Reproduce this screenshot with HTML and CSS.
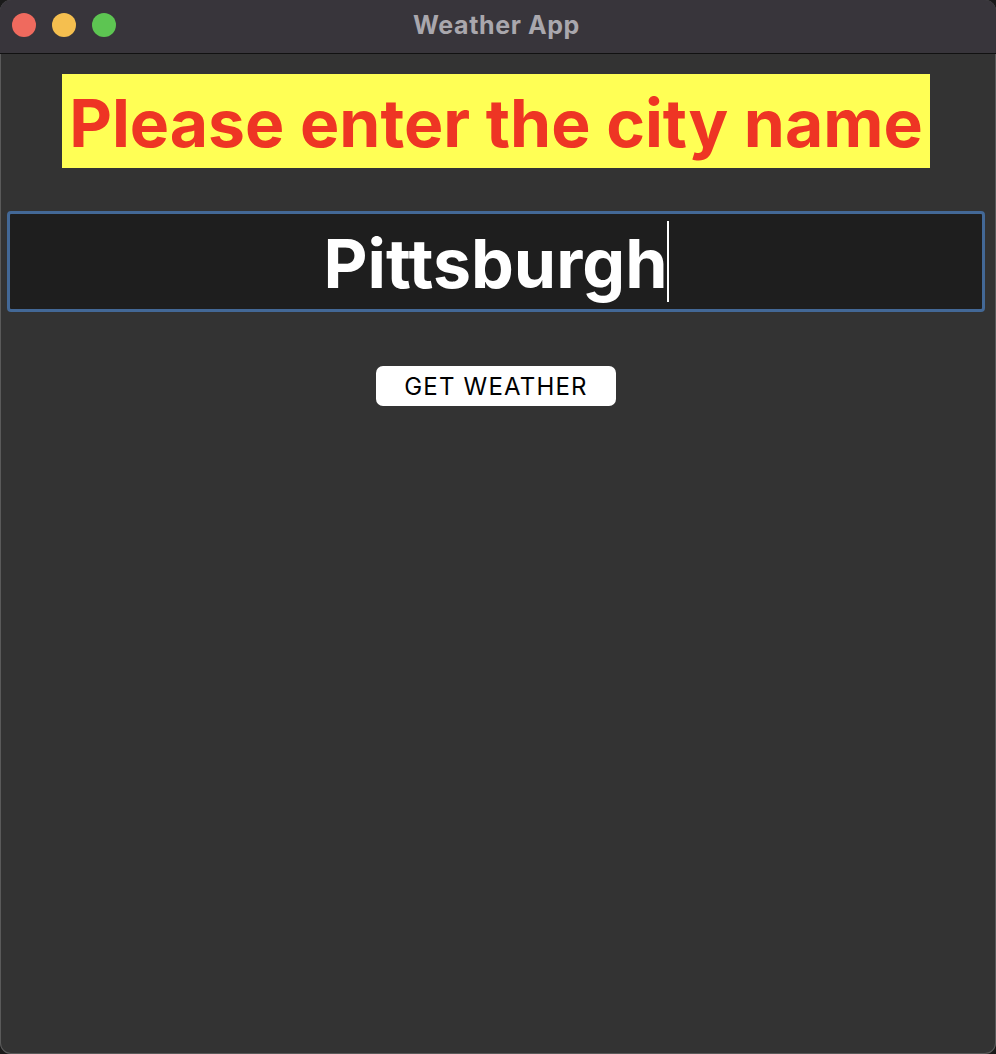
FILE: index.html
```html
<!DOCTYPE html>
<html>
<head>
<meta charset="utf-8">
<link rel="stylesheet" href="styles.css">
</head>
<body>
<div class="window">
  <div class="titlebar">
    <div class="lights">
      <span class="light red"></span>
      <span class="light yellow"></span>
      <span class="light green"></span>
    </div>
    <div class="title">Weather App</div>
  </div>
  <div class="content">
    <div class="banner">Please enter the city name</div>
    <div class="field"><span class="value">Pittsburgh</span><span class="caret"></span></div>
    <button class="btn">GET WEATHER</button>
  </div>
</div>
</body>
</html>
```
FILE: styles.css
```css
* { box-sizing: border-box; }
html, body {
  margin: 0;
  padding: 0;
  background: #1a1a1a;
  width: 996px;
  height: 1054px;
  overflow: hidden;
}
.window {
  width: 996px;
  height: 1054px;
  border-radius: 11px;
  overflow: hidden;
  background: #333333;
  display: flex;
  flex-direction: column;
  box-shadow: inset 0 0 0 1px #5a5a5a;
}
.titlebar {
  height: 54px;
  background: #38353b;
  border-bottom: 1px solid #111;
  position: relative;
  display: flex;
  align-items: center;
  justify-content: center;
  flex-shrink: 0;
}
.lights {
  position: absolute;
  left: 12px;
  top: 13px;
  display: flex;
  gap: 16px;
}
.light {
  width: 24px;
  height: 24px;
  border-radius: 50%;
  display: block;
}
.red { background: #ef6a5e; }
.yellow { background: #f5bf4f; }
.green { background: #5dc552; }
.title {
  font-family: Inter, "Liberation Sans", sans-serif;
  font-weight: 700;
  font-size: 25px;
  letter-spacing: 0.6px;
  color: #a9a7ad;
  margin-top: -4px;
  margin-right: 3px;
}
.content {
  flex: 1;
  display: flex;
  flex-direction: column;
  align-items: center;
  padding: 20px 11px 0 7px;
}
.banner {
  width: 868px;
  height: 94px;
  background: #ffff55;
  color: #ee3524;
  font-family: Inter, "Liberation Sans", sans-serif;
  font-weight: 700;
  font-size: 66px;
  display: flex;
  align-items: center;
  justify-content: center;
  white-space: nowrap;
  padding-top: 4px;
}
.field {
  margin-top: 43px;
  width: 978px;
  height: 101px;
  background: #1e1e1e;
  border: 3px solid #436896;
  border-radius: 4px;
  display: flex;
  align-items: center;
  justify-content: center;
  font-family: Inter, "Liberation Sans", sans-serif;
  font-weight: 700;
  font-size: 68px;
  color: #ffffff;
}
.value { line-height: 1; padding-top: 2px; }
.caret {
  width: 2px;
  height: 81px;
  background: #ffffff;
  margin-left: -1px;
}
.btn {
  margin-top: 54px;
  width: 240px;
  height: 40px;
  background: #ffffff;
  border: none;
  border-radius: 7px;
  font-family: Inter, "Liberation Sans", sans-serif;
  font-size: 24px;
  letter-spacing: 1.2px;
  font-weight: 400;
  color: #000;
  padding: 0;
}
```
